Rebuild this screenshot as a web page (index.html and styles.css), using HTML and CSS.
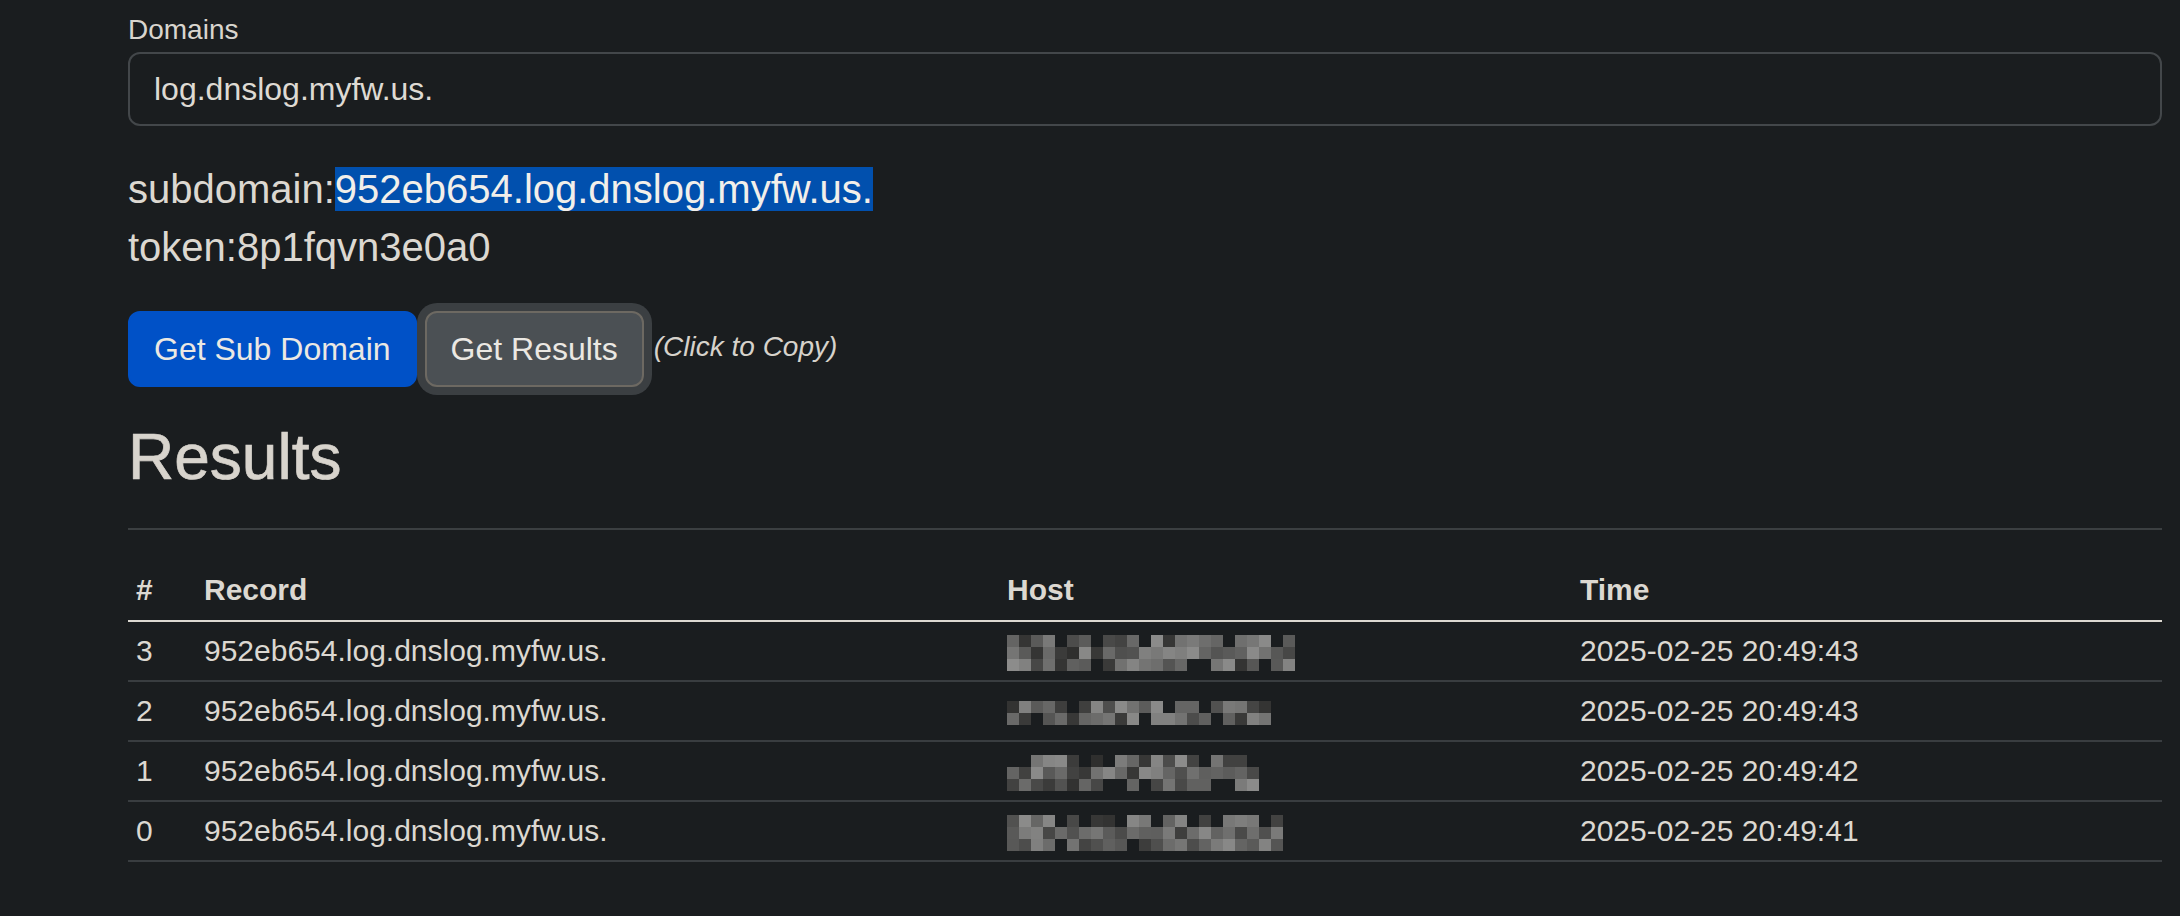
FILE: index.html
```html
<!DOCTYPE html>
<html lang="en">
<head>
<meta charset="utf-8">
<title>DNSLog</title>
<link rel="stylesheet" href="styles.css">
</head>
<body>
<main class="container">
  <div class="field">
    <label class="form-label" for="domains">Domains</label>
    <input class="form-control" id="domains" type="text" value="log.dnslog.myfw.us.">
  </div>
  <div class="info">
    <div class="info-line">subdomain:<span class="selected">952eb654.log.dnslog.myfw.us.</span></div>
    <div class="info-line">token:8p1fqvn3e0a0</div>
  </div>
  <div class="actions">
    <button class="btn btn-primary" type="button">Get Sub Domain</button>
    <button class="btn btn-secondary is-focused" type="button">Get Results</button>
    <small class="hint">(Click to Copy)</small>
  </div>
  <h2 class="heading">Results</h2>
  <hr class="divider">
  <table class="results">
    <colgroup>
      <col class="col-idx">
      <col class="col-record">
      <col class="col-host">
      <col class="col-time">
    </colgroup>
    <thead>
      <tr><th>#</th><th>Record</th><th>Host</th><th>Time</th></tr>
    </thead>
    <tbody>
      <tr><td>3</td><td>952eb654.log.dnslog.myfw.us.</td><td><span class="mosaic" data-w="288" data-rows="3" data-seed="17"></span></td><td>2025-02-25 20:49:43</td></tr>
      <tr><td>2</td><td>952eb654.log.dnslog.myfw.us.</td><td><span class="mosaic" data-w="264" data-rows="2" data-seed="91"></span></td><td>2025-02-25 20:49:43</td></tr>
      <tr><td>1</td><td>952eb654.log.dnslog.myfw.us.</td><td><span class="mosaic" data-w="252" data-rows="3" data-seed="43"></span></td><td>2025-02-25 20:49:42</td></tr>
      <tr><td>0</td><td>952eb654.log.dnslog.myfw.us.</td><td><span class="mosaic" data-w="276" data-rows="3" data-seed="7"></span></td><td>2025-02-25 20:49:41</td></tr>
    </tbody>
  </table>
</main>
<script src="script.js"></script>
</body>
</html>
```

FILE: styles.css
```css
* { box-sizing: border-box; }

html, body {
  margin: 0;
  background: #1a1d1f;
}

body {
  color: #dcd8d1;
  font-family: "Liberation Sans", Arial, sans-serif;
}

.container {
  padding: 9px 18px 40px 128px;
}

.form-label {
  display: block;
  font-size: 28px;
  line-height: 42px;
  margin-bottom: 1px;
  color: #d9d5ce;
}

.form-control {
  display: block;
  width: 100%;
  height: 74px;
  padding: 0 24px;
  font-family: inherit;
  font-size: 32px;
  color: #dedad3;
  background: #1a1d1f;
  border: 2px solid #43474a;
  border-radius: 12px;
  outline: none;
}

.info {
  margin-top: 34px;
  font-size: 40px;
  line-height: 58px;
}

.selected {
  background: #0150ae;
  color: #f2efea;
}

.actions {
  display: flex;
  align-items: center;
  margin-top: 35px;
}

.btn {
  height: 76px;
  padding: 0 24px;
  font-family: inherit;
  font-size: 32px;
  color: #ebe8e3;
  border: 2px solid transparent;
  border-radius: 12px;
}

.btn-primary {
  background: #0051c7;
  border-color: #0051c7;
  margin-right: 8px;
}

.btn-secondary {
  background: #4b5054;
  border-color: #6d6962;
}

.is-focused {
  box-shadow: 0 0 0 8px #3b3f42;
}

.hint {
  margin-left: 10px;
  padding-bottom: 4px;
  font-size: 28px;
  line-height: 42px;
  font-style: italic;
  color: #d6d2cb;
}

.heading {
  margin: 32px 0 0;
  font-size: 64px;
  font-weight: 400;
  line-height: 77px;
  color: #d8d4cd;
  -webkit-text-stroke: 0.7px currentColor;
}

.divider {
  margin: 32px 0 0;
  height: 0;
  border: 0;
  border-top: 2px solid #3b3f41;
}

.results {
  margin-top: 30px;
  width: 100%;
  border-collapse: collapse;
  table-layout: fixed;
  font-size: 30px;
  line-height: 44px;
}

.col-idx { width: 68px; }
.col-record { width: 803px; }
.col-host { width: 573px; }

.results th {
  text-align: left;
  font-weight: 700;
  padding: 8px;
  border-bottom: 2px solid #dcd8d1;
}

.results td {
  padding: 7px 8px;
  border-bottom: 2px solid #393d40;
  white-space: nowrap;
}

.mosaic {
  display: inline-block;
  vertical-align: middle;
  line-height: 0;
}

.mosaic svg {
  display: block;
}
```

FILE: script.js
```js
(function () {
  function rng(seed) {
    return function () {
      seed = (seed * 1103515245 + 12345) & 0x7fffffff;
      return seed / 0x7fffffff;
    };
  }
  var ns = 'http://www.w3.org/2000/svg';
  document.querySelectorAll('.mosaic').forEach(function (el) {
    var w = +el.dataset.w, rows = +el.dataset.rows, r = rng(+el.dataset.seed), s = 12;
    var cols = Math.ceil(w / s);
    var svg = document.createElementNS(ns, 'svg');
    svg.setAttribute('width', cols * s);
    svg.setAttribute('height', rows * s);
    svg.setAttribute('role', 'img');
    svg.setAttribute('aria-label', 'hidden host address');
    for (var y = 0; y < rows; y++) {
      for (var x = 0; x < cols; x++) {
        var v = r();
        var edge = (y === 0 || y === rows - 1);
        if (edge && v < 0.2) continue;
        var g = Math.round(45 + Math.pow(r(), 0.8) * 95);
        var rect = document.createElementNS(ns, 'rect');
        rect.setAttribute('x', x * s);
        rect.setAttribute('y', y * s);
        rect.setAttribute('width', s);
        rect.setAttribute('height', s);
        rect.setAttribute('fill', 'rgb(' + g + ',' + g + ',' + (g - 1) + ')');
        svg.appendChild(rect);
      }
    }
    el.appendChild(svg);
  });
})();
```
